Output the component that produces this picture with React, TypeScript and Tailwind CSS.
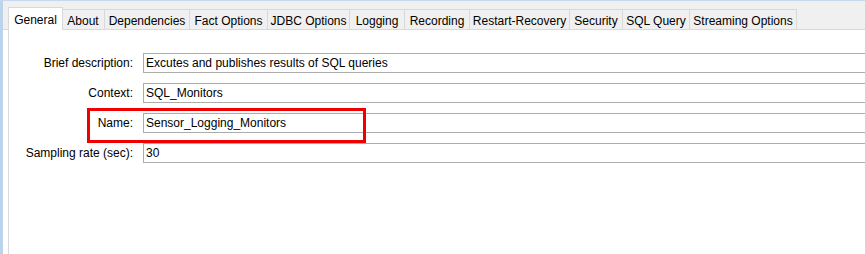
import React from "react";

const tabs: { label: string; w: string }[] = [
  { label: "About", w: "w-[43px]" },
  { label: "Dependencies", w: "w-[85px]" },
  { label: "Fact Options", w: "w-[78px]" },
  { label: "JDBC Options", w: "w-[82px]" },
  { label: "Logging", w: "w-[55px]" },
  { label: "Recording", w: "w-[65px]" },
  { label: "Restart-Recovery", w: "w-[100px]" },
  { label: "Security", w: "w-[53px]" },
  { label: "SQL Query", w: "w-[67px]" },
  { label: "Streaming Options", w: "w-[107px]" },
];

const rows = [
  { label: "Brief description:", value: "Excutes and publishes results of SQL queries" },
  { label: "Context:", value: "SQL_Monitors" },
  { label: "Name:", value: "Sensor_Logging_Monitors" },
  { label: "Sampling rate (sec):", value: "30" },
];

export default function App() {
  return (
    <div
      className="w-[865px] h-[254px] bg-white flex flex-col overflow-hidden text-[12px] text-black"
      style={{ fontFamily: '"Liberation Sans", Arial, sans-serif' }}
    >
      <div className="h-px bg-[#c4d8ee] shrink-0" />
      <div className="flex flex-1 min-h-0">
        <div className="w-[3px] bg-[#bcd3ec] shrink-0" />
        <div className="flex-1 flex flex-col min-w-0">
          {/* tab strip */}
          <div className="h-[29px] bg-[#f0f0f0] flex items-end pl-[5px] border-b border-[#d9d9d9] shrink-0">
            <div className="relative z-10 -mb-px h-[23px] w-[55px] bg-white border border-b-0 border-[#d9d9d9] flex items-start justify-center pt-[3px]">
              General
            </div>
            {tabs.map((t, i) => (
              <div
                key={t.label}
                className={`h-[20px] ${t.w} border-t border-r border-[#d9d9d9] bg-[#f0f0f0] flex items-center justify-center pt-[2px] whitespace-nowrap ${
                  i === 0 ? "-ml-px border-l-0" : ""
                }`}
              >
                {t.label}
              </div>
            ))}
          </div>
          {/* content */}
          <div className="relative flex-1 bg-white ml-[5px] border-l border-[#d9d9d9] pt-[23px] flex flex-col gap-[10px]">
            {rows.map((r) => (
              <div key={r.label} className="flex items-center h-[20px]">
                <div className="w-[125px] text-right pr-[1px] whitespace-nowrap">{r.label}</div>
                <div className="ml-[9px] flex-1 h-[20px] border border-r-0 border-[#acacac] pl-[2px] flex items-center whitespace-nowrap">
                  {r.value}
                </div>
              </div>
            ))}
            <div className="absolute left-[78px] top-[78px] w-[279px] h-[35px] border-[3px] border-[#f00000]" />
          </div>
        </div>
      </div>
    </div>
  );
}
